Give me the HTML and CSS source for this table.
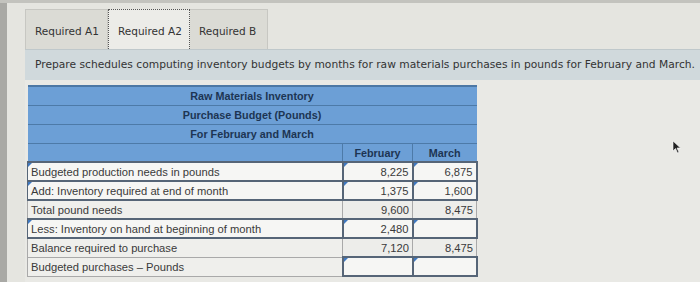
FILE: index.html
```html
<!DOCTYPE html>
<html>
<head>
<meta charset="utf-8">
<link rel="stylesheet" href="styles.css">
</head>
<body>
<div class="frame">
  <div class="edge"></div>
  <div class="main">
    <div class="tabs">
      <div class="tab tab-a1">Required A1</div>
      <div class="tab tab-a2 active">Required A2</div>
      <div class="tab tab-b">Required B</div>
    </div>
    <div class="instr">Prepare schedules computing inventory budgets by months for raw materials purchases in pounds for February and March.</div>
    <div class="content">
      <table class="budget">
        <colgroup><col class="c-label"><col class="c-feb"><col class="c-mar"></colgroup>
        <tr class="title"><th colspan="3">Raw Materials Inventory</th></tr>
        <tr class="title"><th colspan="3">Purchase Budget (Pounds)</th></tr>
        <tr class="title"><th colspan="3">For February and March</th></tr>
        <tr class="colhead"><th></th><th>February</th><th>March</th></tr>
        <tr><td class="label in">Budgeted production needs in pounds</td><td class="in num">8,225</td><td class="in num">6,875</td></tr>
        <tr><td class="label in">Add: Inventory required at end of month</td><td class="in num">1,375</td><td class="in num">1,600</td></tr>
        <tr><td class="label">Total pound needs</td><td class="calc num">9,600</td><td class="calc num">8,475</td></tr>
        <tr><td class="label in">Less: Inventory on hand at beginning of month</td><td class="in num">2,480</td><td class="in num"></td></tr>
        <tr><td class="label">Balance required to purchase</td><td class="calc num">7,120</td><td class="calc num">8,475</td></tr>
        <tr><td class="label">Budgeted purchases &ndash; Pounds</td><td class="in num"></td><td class="in num"></td></tr>
      </table>
      <svg class="cursor" width="10" height="14" viewBox="0 0 10 14"><path d="M1 1 L1 11 L3.5 8.5 L5.5 13 L7 12.3 L5 8 L8.5 8 Z" fill="#222" stroke="#fff" stroke-width="0.6"/></svg>
    </div>
  </div>
</div>
</body>
</html>
```

FILE: styles.css
```css
html, body {
  margin: 0;
  padding: 0;
  background: #e5e5e0;
  width: 700px;
  height: 282px;
  overflow: hidden;
}
.frame {
  display: flex;
  height: 282px;
  border-top: 3px solid #c3c3be;
  box-sizing: border-box;
}
.edge {
  width: 7px;
  flex: none;
  background: #a9a9a5;
}
.main {
  flex: 1;
  padding: 6px 0 0 18px;
  font-family: "DejaVu Sans", Verdana, sans-serif;
}
.tabs {
  display: flex;
  height: 40px;
}
.tab {
  box-sizing: border-box;
  height: 40px;
  background: #dbdbd5;
  border: 1px solid #c7c7c2;
  border-bottom: none;
  font-size: 10.5px;
  color: #333;
  padding: 15px 0 0 9px;
}
.tab-a1 { width: 83px; }
.tab-a2 { width: 82px; }
.tab-b { width: 78px; border-left: none; }
.tab.active {
  background: #ecece8;
  border: 1px dotted #555;
  border-bottom: none;
}
.instr {
  height: 31px;
  box-sizing: border-box;
  background: #d0d9dc;
  border-top: 1px solid #bfc8cb;
  padding: 8px 0 0 10px;
  font-size: 10.7px;
  color: #333;
  white-space: nowrap;
}
.content {
  position: relative;
  padding: 5px 0 0 2px;
  background: #e9e9e5;
  height: 200px;
}
.budget {
  border-collapse: collapse;
  font-family: "Liberation Sans", Arial, sans-serif;
  font-size: 11.2px;
  width: 449px;
  table-layout: fixed;
}
.c-label { width: 315px; }
.c-feb { width: 70px; }
.c-mar { width: 64px; }
.budget th {
  background: #6c9fd6;
  color: #1d3553;
  font-weight: bold;
  font-size: 10.8px;
  height: 18px;
  padding: 0;
  border-top: 1px solid #4d7aa8;
}
.title th {
  text-align: center;
}
.budget tr:first-child th {
  border-top: 2px solid #4c77a4;
}
.colhead th {
  border-left: 1px solid #4d7aa8;
  height: 17px;
}
.colhead th:first-child { border-left: none; }
.budget td {
  height: 17px;
  padding: 0 3px;
  color: #3a3a3a;
  border: 1px solid #a9a9a9;
  background: #ededea;
  white-space: nowrap;
  overflow: hidden;
  position: relative;
}
.budget td.label {
  padding-left: 3px;
  background: #efefec;
}
.budget td.in {
  border: 2px solid #566577;
  background: #f6f6f4;
}
.budget td.label.in {
  border-left: 1px solid #566577;
  border-right: 1px solid #a9a9a9;
}
.budget td.in::before {
  content: "";
  position: absolute;
  left: 0;
  top: 0;
  border-top: 4px solid #3f78c0;
  border-right: 4px solid transparent;
}
.budget td.num {
  text-align: right;
  padding-right: 3px;
}
.cursor {
  position: absolute;
  left: 647px;
  top: 60px;
}
```
